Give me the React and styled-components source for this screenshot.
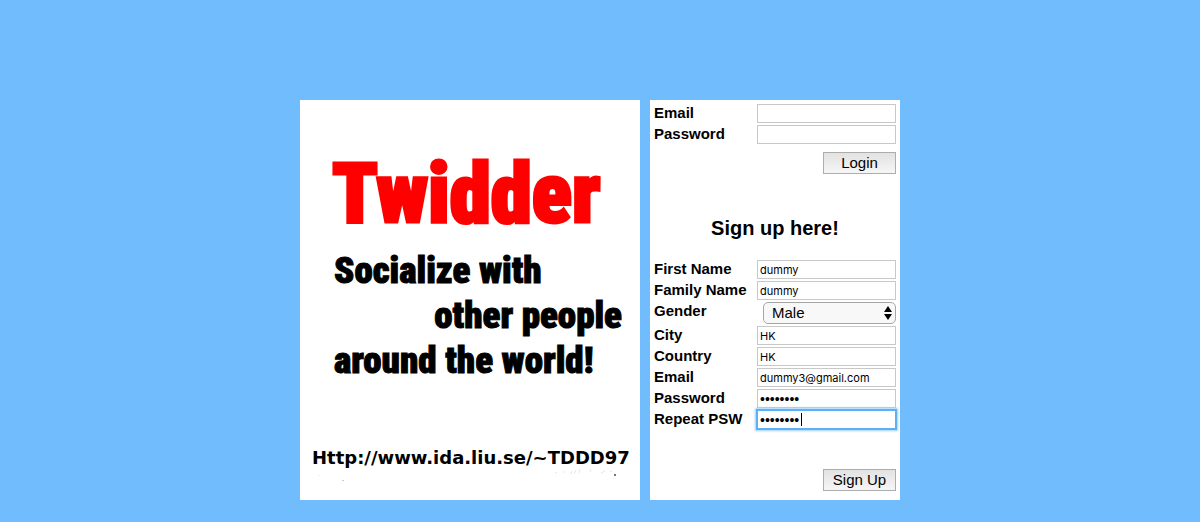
import React, { useEffect, useRef } from "react";
import styled, { createGlobalStyle } from "styled-components";

const GlobalStyle = createGlobalStyle`
  * { box-sizing: border-box; }
  body {
    margin: 0;
    background: #70bcfc;
    color: #000;
    font: 15px/18px "Liberation Sans", Arial, sans-serif;
  }
`;

const Page = styled.main`
  display: flex;
  gap: 10px;
  max-width: 600px;
  margin: 0 auto;
  padding: 100px 0 22px;
`;

const Banner = styled.section`
  flex: 1 1 340px;
  min-width: 0;
  display: flex;
  flex-direction: column;
  padding: 45px 8px 15px 32px;
  background: #fff;
  font-family: "Roboto Condensed", Impact, "Liberation Sans", sans-serif;
  font-weight: 900;
  white-space: nowrap;
`;

const Brand = styled.h1`
  margin: 0;
  font-size: 83px;
  line-height: 98px;
  font-weight: 900;
  color: #f00;
  -webkit-text-stroke: 3px #f00;
`;

const Slogan = styled.p`
  margin: 5px 0 0;
  padding: 0 10px 0 2px;
  font-size: 37px;
  line-height: 45px;
  -webkit-text-stroke: 1px #000;
`;

const SloganLine = styled.span`
  display: block;
  text-align: ${(p) => p.$align || "left"};
`;

const Address = styled.div`
  margin: auto 0 0 -20px;
  font-family: "DejaVu Sans", Verdana, sans-serif;
  font-weight: 700;
  font-size: 18px;
  line-height: 22px;
`;

const Specks = styled.svg`
  display: block;
  width: 320px;
  height: 16px;
`;

const Panel = styled.section`
  flex: 0 0 250px;
  padding: 4px 4px 9px;
  background: #fff;
`;

const Form = styled.form`
  display: flex;
  flex-direction: column;
  gap: 2px;
`;

const Row = styled.div`
  display: grid;
  grid-template-columns: 103px 1fr;
`;

const Label = styled.label`
  font-weight: 700;
`;

const BoxWrap = styled.div`
  position: relative;
  display: flex;
`;

const TextBox = styled.input`
  width: 100%;
  height: 19px;
  padding: 1px 2px 0;
  border: 1px solid #c8c8c8;
  background: #fff;
  color: #000;
  font: 11px Inter, "Liberation Sans", sans-serif;
  &[type="password"] {
    font: 14px "Liberation Sans", Arial, sans-serif;
  }
  &:focus {
    outline: 2px solid #5cb0f5;
    outline-offset: -1px;
    box-shadow: 0 0 2px 2px #9fd0fa;
    caret-color: transparent;
  }
`;

const Caret = styled.span`
  position: absolute;
  top: 3px;
  left: 44px;
  width: 1px;
  height: 13px;
  background: #000;
  pointer-events: none;
`;

const SelectWrap = styled.div`
  position: relative;
  margin-left: 6px;
`;

const Select = styled.select`
  display: block;
  appearance: none;
  width: 100%;
  height: 22px;
  padding: 0 20px 1px 8px;
  border: 1px solid #a6a6a6;
  border-radius: 5px;
  background: #f8f8f8;
  color: #000;
  font: 15px "Liberation Sans", Arial, sans-serif;
`;

const Arrows = styled.svg`
  position: absolute;
  top: 4px;
  right: 4px;
  pointer-events: none;
`;

const Button = styled.button`
  align-self: flex-end;
  width: 73px;
  height: 22px;
  margin-top: ${(p) => p.$space}px;
  padding: 0 0 2px;
  border: 1px solid #adadad;
  background: linear-gradient(#e2e2e2, #f6f6f6);
  color: #000;
  font: 15px "Liberation Sans", Arial, sans-serif;
`;

const Heading = styled.h2`
  margin: 42px 0 20px;
  font-size: 20px;
  line-height: 24px;
  text-align: center;
`;

function Field({ id, label, inputRef, showCaret, ...rest }) {
  return (
    <Row>
      <Label htmlFor={id}>{label}</Label>
      <BoxWrap>
        <TextBox id={id} ref={inputRef} type="text" {...rest} />
        {showCaret && <Caret />}
      </BoxWrap>
    </Row>
  );
}

export default function App() {
  const repeat = useRef(null);

  useEffect(() => {
    repeat.current.focus();
  }, []);

  const stop = (e) => e.preventDefault();

  return (
    <>
      <GlobalStyle />
      <Page>
        <Banner>
          <Brand>Twidder</Brand>
          <Slogan>
            <SloganLine>Socialize with</SloganLine>
            <SloganLine $align="right">other people</SloganLine>
            <SloganLine>around the world!</SloganLine>
          </Slogan>
          <Address>
            Http://www.ida.liu.se/~TDDD97
            <Specks viewBox="0 0 320 16" aria-hidden="true">
              <g stroke="#e6e6e6" fill="none">
                <path d="M245 3l-2 1M253 2l-2 2M260 2l-1 3M264 1l-2 4M268 0l-1 4M279 0l-1 3M289 4l4-2M298 3l2-1" />
              </g>
              <rect x="302" y="5" width="2" height="2" fill="#777" />
              <rect x="30" y="11" width="2" height="1" fill="#ccc" />
              <rect x="6" y="6" width="2" height="1" fill="#f2f2f2" />
            </Specks>
          </Address>
        </Banner>

        <Panel>
          <Form onSubmit={stop}>
            <Field id="login-email" label="Email" />
            <Field id="login-password" label="Password" type="password" />
            <Button $space={6}>Login</Button>
          </Form>
          <Heading>Sign up here!</Heading>
          <Form onSubmit={stop}>
            <Field id="first-name" label="First Name" defaultValue="dummy" />
            <Field id="family-name" label="Family Name" defaultValue="dummy" />
            <Row>
              <Label htmlFor="gender">Gender</Label>
              <SelectWrap>
                <Select id="gender" defaultValue="Male">
                  <option>Male</option>
                  <option>Female</option>
                </Select>
                <Arrows width="8" height="14" viewBox="0 0 8 14" aria-hidden="true">
                  <path d="M4 0l4 6H0zM4 14l4-6H0z" />
                </Arrows>
              </SelectWrap>
            </Row>
            <Field id="city" label="City" defaultValue="HK" />
            <Field id="country" label="Country" defaultValue="HK" />
            <Field id="email" label="Email" defaultValue="dummy3@gmail.com" />
            <Field id="password" label="Password" type="password" defaultValue="password" />
            <Field
              id="repeat"
              label="Repeat PSW"
              type="password"
              defaultValue="password"
              inputRef={repeat}
              showCaret
            />
            <Button $space={38}>Sign Up</Button>
          </Form>
        </Panel>
      </Page>
    </>
  );
}
